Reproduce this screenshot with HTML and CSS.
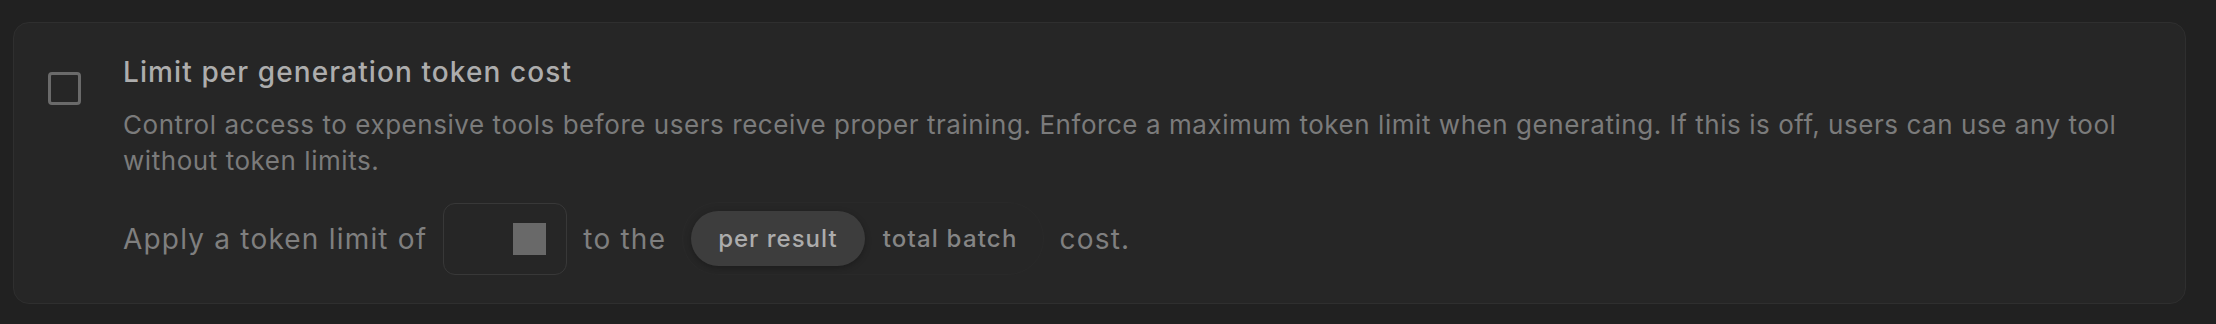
FILE: index.html
```html
<!DOCTYPE html>
<html lang="en">
<head>
<meta charset="utf-8">
<title>Token limit setting</title>
<link rel="stylesheet" href="styles.css">
</head>
<body>
<div class="card">
  <div class="check" role="checkbox" aria-checked="false"></div>
  <div class="content">
    <h2 class="title">Limit per generation token cost</h2>
    <p class="desc">Control access to expensive tools before users receive proper training. Enforce a maximum token limit when generating. If this is off, users can use any tool without token limits.</p>
    <div class="row">
      <span class="label">Apply a token limit of</span>
      <div class="input"><span class="spin"></span></div>
      <span class="label">to the</span>
      <div class="seg">
        <span class="opt active">per result</span>
        <span class="opt">total batch</span>
      </div>
      <span class="label">cost.</span>
    </div>
  </div>
</div>
</body>
</html>
```
FILE: styles.css
```css
html, body {
  margin: 0;
  padding: 0;
  background: #212121;
  font-family: Inter, "Noto Sans", sans-serif;
}
.card {
  margin: 22px 30px 0 13px;
  box-sizing: border-box;
  height: 282px;
  background: #262626;
  border: 1.5px solid #2f2f2f;
  border-radius: 16px;
  display: flex;
  padding: 31px 40px 0 34px;
}
.check {
  flex: none;
  width: 33px;
  height: 33px;
  box-sizing: border-box;
  border: 3.5px solid #6a6a6a;
  border-radius: 4px;
  margin-top: 18px;
  margin-right: 42px;
}
.content {
  flex: 1;
  min-width: 0;
}
.title {
  margin: 0;
  font-size: 28px;
  line-height: 36px;
  font-weight: 500;
  letter-spacing: 1.1px;
  color: #adadad;
}
.desc {
  margin: 17px 0 0;
  font-size: 26px;
  line-height: 36px;
  letter-spacing: 0.55px;
  color: #7b7b7b;
}
.row {
  margin-top: 23px;
  display: flex;
  align-items: center;
  gap: 16px;
}
.label {
  font-size: 28px;
  line-height: 36px;
  letter-spacing: 1.2px;
  color: #7f7f7f;
}
.input {
  width: 124px;
  height: 72px;
  box-sizing: border-box;
  border: 1.5px solid #383838;
  border-radius: 12px;
  display: flex;
  align-items: center;
  justify-content: flex-end;
  padding-right: 20px;
}
.spin {
  width: 33px;
  height: 32px;
  background: #696969;
}
.seg {
  display: flex;
  align-items: center;
  gap: 18px;
  padding: 8px 25px 8px 8px;
  border: 1px solid #292929;
  border-radius: 36px;
}
.opt {
  font-size: 24px;
  line-height: 55px;
  font-weight: 500;
  letter-spacing: 1.2px;
  color: #858585;
}
.opt.active {
  padding: 0 27px;
  border-radius: 28px;
  background: #3d3d3d;
  color: #acacac;
  letter-spacing: 1px;
  box-shadow: 0 2px 6px rgba(0, 0, 0, 0.25);
}
```
